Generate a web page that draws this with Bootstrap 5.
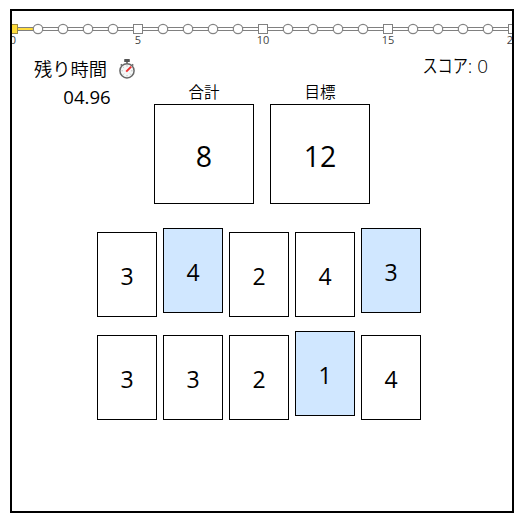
<!DOCTYPE html>
<html lang="ja">
<head>
<meta charset="utf-8">
<meta name="viewport" content="width=device-width, initial-scale=1">
<title>合計ゲーム</title>
<link href="https://cdn.jsdelivr.net/npm/bootstrap@5.3.0/dist/css/bootstrap.min.css" rel="stylesheet">
<style>
body{font-family:"Open Sans","Noto Sans CJK JP",sans-serif;color:#000;background:#fff;overflow:hidden}
.jp{font-family:"Open Sans","Noto Sans CJK JP",sans-serif;font-weight:350}
.game{width:504px;height:504px;margin:9px 0 0 10px;border:2px solid #000}
.track{height:39px}
.info{height:54px;padding:0 24px 0 22px}
.clock-label{font-size:18.3px;line-height:28px;padding-top:5px}
.clock-icon{margin-left:10px}
.clock-value{font-size:18.6px;line-height:28px;padding-left:3px}
.score{font-size:19px;line-height:28px;padding-top:2px}
.kana{display:inline-block;transform:scaleX(.8);transform-origin:right center}
.totals{gap:16px;margin-top:-19px}
.total-label{font-size:15.5px;line-height:15px;height:19px}
.total-box{width:100px;height:100px;border:1px solid #000;font-size:28.5px;line-height:1;padding-top:4px}
.tiles{padding:28px 0 0 85px;gap:18px}
.tile-row{gap:6px}
.tile{width:60px;height:85px;border:1px solid #000;font-size:23px;line-height:1;padding-top:3px;background:#fff}
.tile.picked{background:#d0e7ff;transform:translateY(-4px)}
.tick{font:11px "Open Sans",sans-serif;fill:#444;text-anchor:middle}
</style>
<script src="https://cdn.jsdelivr.net/npm/bootstrap@5.3.0/dist/js/bootstrap.bundle.min.js"></script>
</head>
<body>
<main class="game overflow-hidden">
  <svg class="track d-block" width="500" height="39" viewBox="0 0 500 39">
    <defs>
      <circle id="c" r="4.7" fill="#fff" stroke="#848484" stroke-width="1.2"/>
      <rect id="s" x="-4.5" y="-4.5" width="9" height="9" fill="#fff" stroke="#808080"/>
    </defs>
    <path d="M0 16.5H500M0 19.5H500" stroke="#808080"/>
    <path d="M0 18H22" stroke="#ffdc3c" stroke-width="2"/>
    <rect x="-3.5" y="13.5" width="9" height="9" fill="#ffdc3c" stroke="#9a8840"/>
    <use href="#c" x="26" y="18"/><use href="#c" x="51" y="18"/><use href="#c" x="76" y="18"/><use href="#c" x="101" y="18"/>
    <use href="#s" x="126" y="18"/>
    <use href="#c" x="151" y="18"/><use href="#c" x="176" y="18"/><use href="#c" x="201" y="18"/><use href="#c" x="226" y="18"/>
    <use href="#s" x="251" y="18"/>
    <use href="#c" x="276" y="18"/><use href="#c" x="301" y="18"/><use href="#c" x="326" y="18"/><use href="#c" x="351" y="18"/>
    <use href="#s" x="376" y="18"/>
    <use href="#c" x="401" y="18"/><use href="#c" x="426" y="18"/><use href="#c" x="451" y="18"/><use href="#c" x="476" y="18"/>
    <use href="#s" x="501" y="18"/>
    <text class="tick" x="1" y="33">0</text><text class="tick" x="126" y="33">5</text><text class="tick" x="251" y="33">10</text><text class="tick" x="376" y="33">15</text><text class="tick" x="501" y="33">20</text>
  </svg>
  <header class="info d-flex justify-content-between align-items-start">
    <div>
      <div class="clock-label jp d-flex align-items-center"><span>残り時間</span>
        <svg class="clock-icon" width="20" height="22" viewBox="0 0 20 22" aria-hidden="true">
          <rect x="7.2" y="1" width="5.6" height="3" rx=".6" fill="#555"/><path d="M10 4v2M3.8 6.4l1 1M16.2 6.4l-1 1" stroke="#666" stroke-width="1.6"/>
          <circle cx="10" cy="12.8" r="7.1" fill="#f5f8f8" stroke="#686868" stroke-width="1.5"/>
          <path d="M10 7.3v1.3M10 17v1.3M4.5 12.8h1.3M14.2 12.8h1.3M6.2 9l.9.9M6.2 16.6l.9-.9M13.8 16.6l-.9-.9" stroke="#aaa" stroke-width=".8"/>
          <path d="M9.2 13.6L14.2 8.6" stroke="#f03030" stroke-width="2"/>
        </svg>
      </div>
      <div class="clock-value text-center">04.96</div>
    </div>
    <div class="score jp"><span class="kana">スコア</span>: 0</div>
  </header>
  <section class="totals d-flex justify-content-center">
    <div><div class="total-label jp text-center">合計</div><div class="total-box d-flex align-items-center justify-content-center">8</div></div>
    <div><div class="total-label jp text-center">目標</div><div class="total-box d-flex align-items-center justify-content-center">12</div></div>
  </section>
  <section class="tiles d-flex flex-column">
    <div class="tile-row d-flex">
      <div class="tile d-flex align-items-center justify-content-center">3</div>
      <div class="tile picked d-flex align-items-center justify-content-center">4</div>
      <div class="tile d-flex align-items-center justify-content-center">2</div>
      <div class="tile d-flex align-items-center justify-content-center">4</div>
      <div class="tile picked d-flex align-items-center justify-content-center">3</div>
    </div>
    <div class="tile-row d-flex">
      <div class="tile d-flex align-items-center justify-content-center">3</div>
      <div class="tile d-flex align-items-center justify-content-center">3</div>
      <div class="tile d-flex align-items-center justify-content-center">2</div>
      <div class="tile picked d-flex align-items-center justify-content-center">1</div>
      <div class="tile d-flex align-items-center justify-content-center">4</div>
    </div>
  </section>
</main>
</body>
</html>
